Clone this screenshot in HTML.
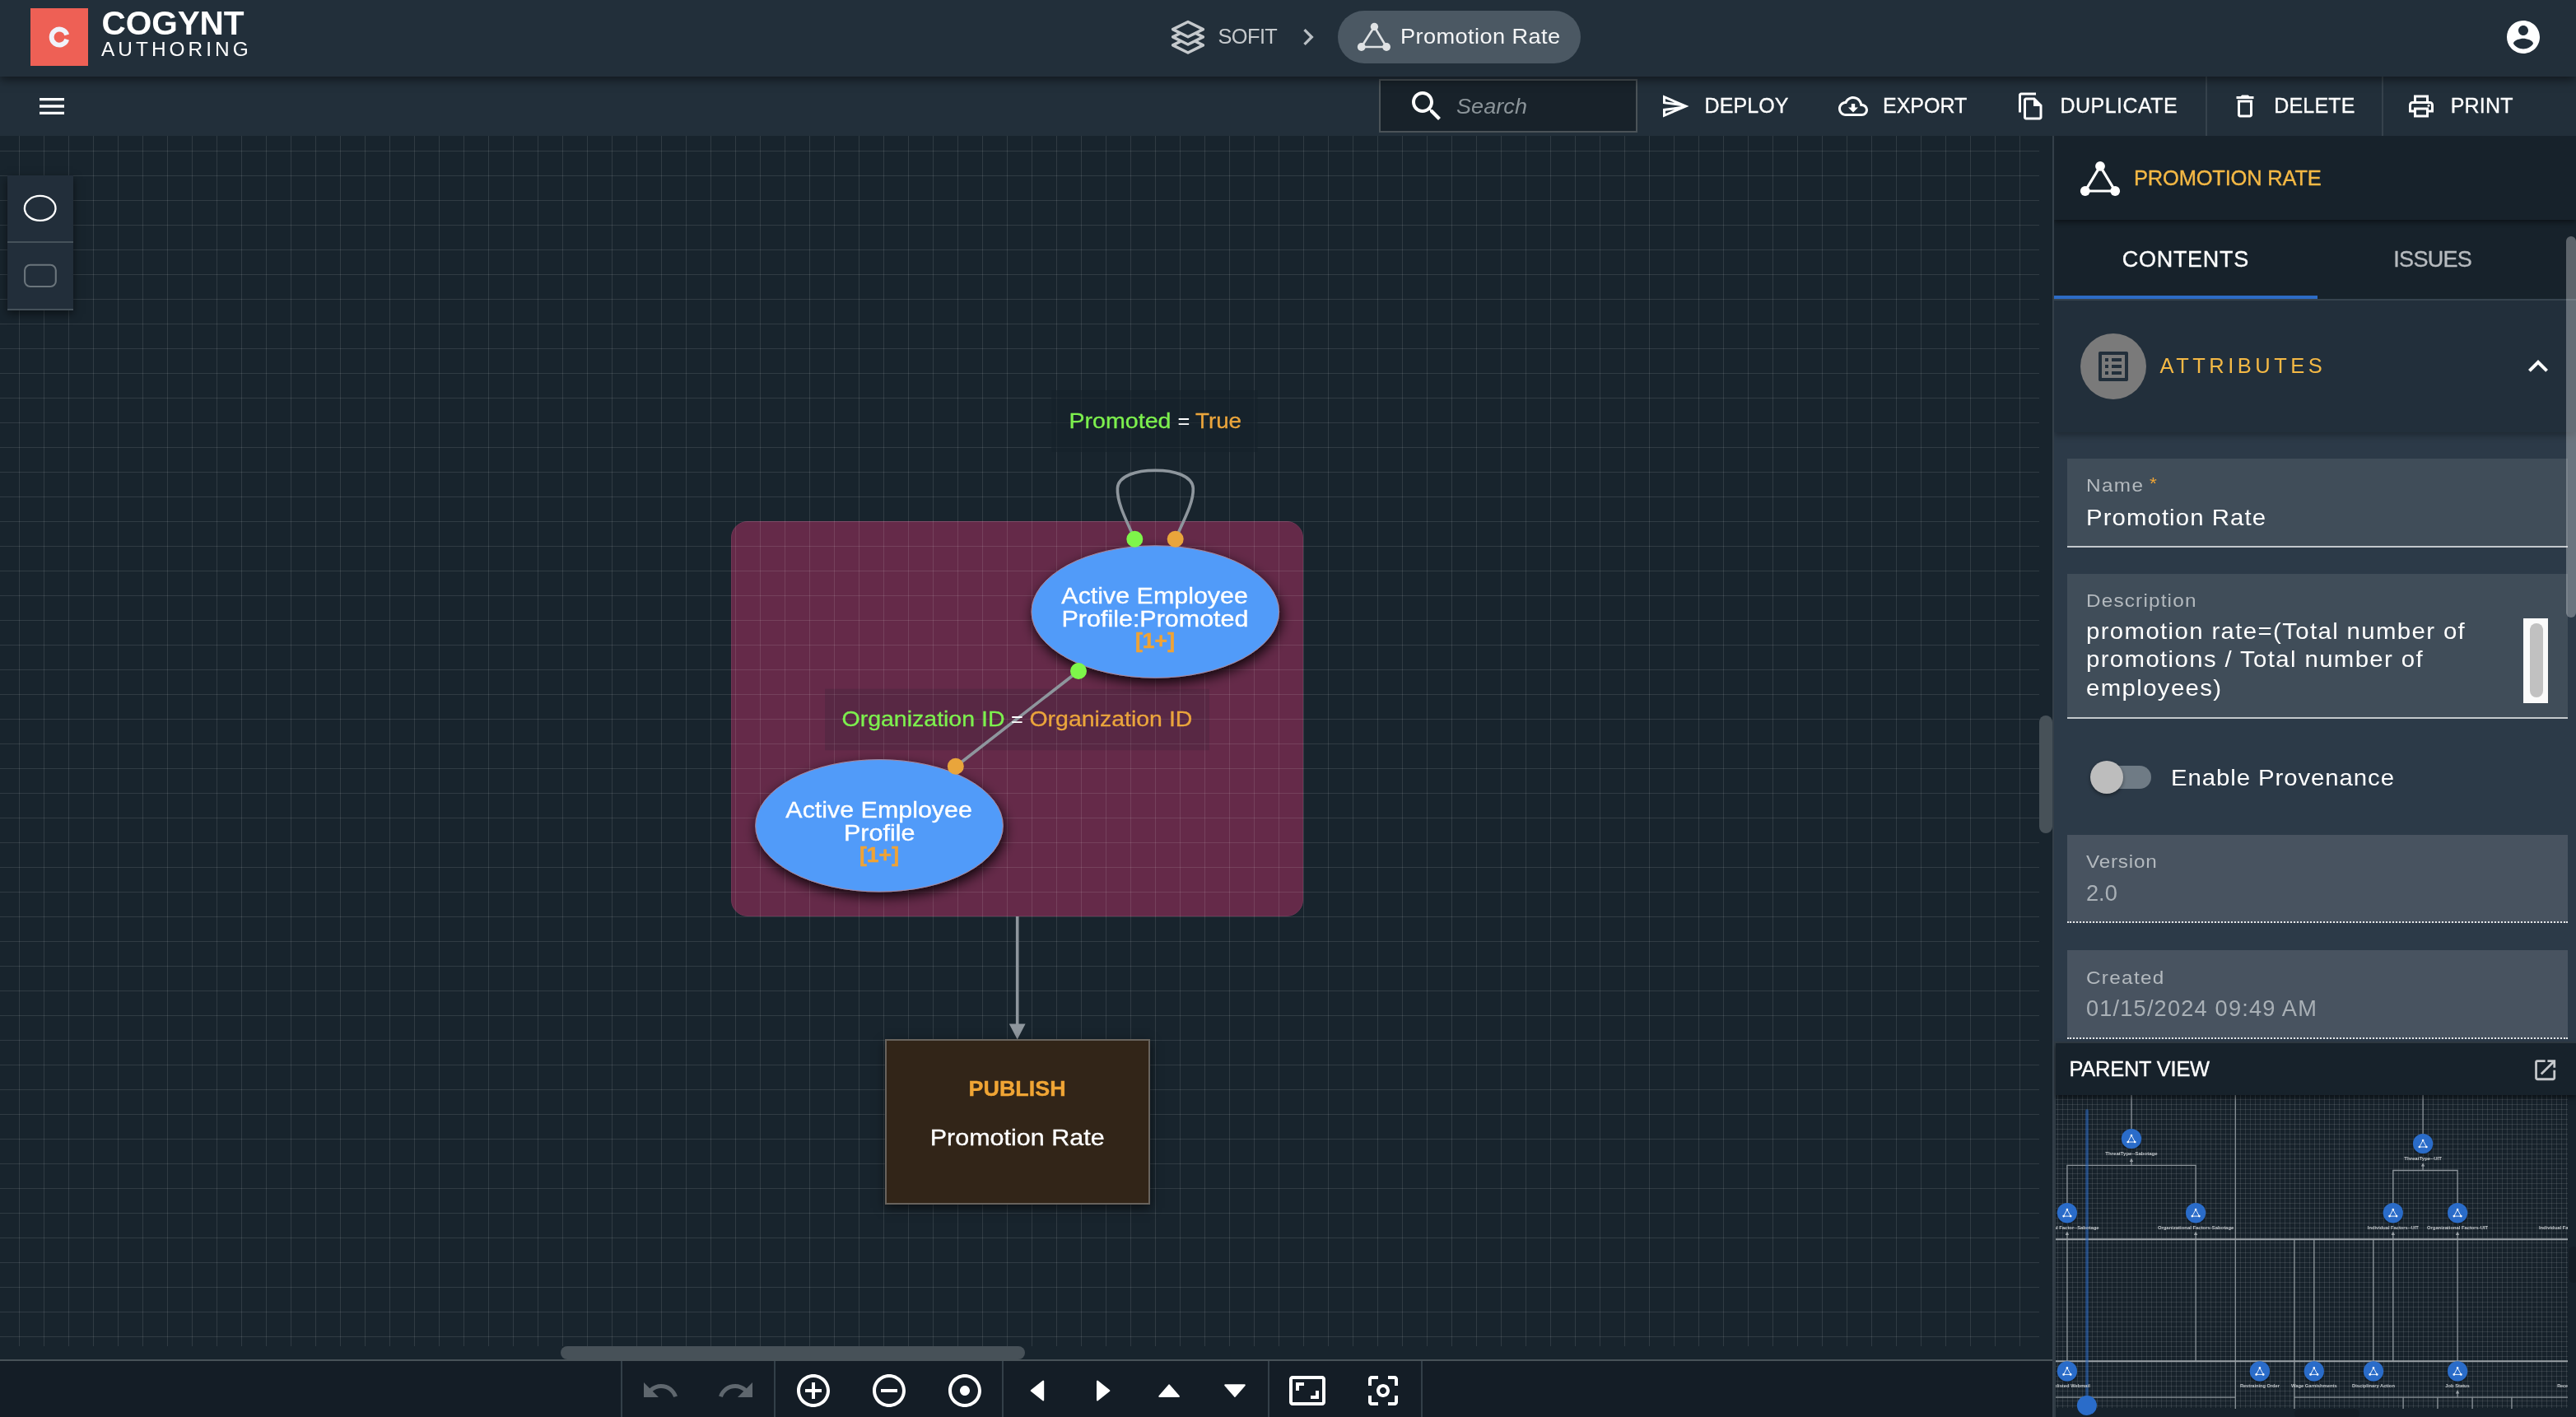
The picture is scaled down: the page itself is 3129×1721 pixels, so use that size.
<!DOCTYPE html>
<html lang="en">
<head>
<meta charset="utf-8">
<title>Cogynt Authoring - Promotion Rate</title>
<style>
*{box-sizing:border-box;margin:0;padding:0}
html,body{width:3129px;height:1721px;overflow:hidden;background:#18242d}
body{position:relative;font-family:"Liberation Sans",sans-serif;color:#fff;-webkit-font-smoothing:antialiased;will-change:transform}
.abs{position:absolute}
.t{position:absolute;white-space:nowrap;line-height:1}
.sx{transform:scaleX(1.08);transform-origin:0 50%}
svg{position:absolute;overflow:visible}
svg.ic{fill:#fff}
/* ---------- header ---------- */
#header{position:absolute;left:0;top:0;width:3129px;height:93px;background:#222f3a;box-shadow:0 4px 11px rgba(0,0,0,.5);z-index:30}
#logo{position:absolute;left:37px;top:10px;width:70px;height:70px;background:#ee6055}
#pill{position:absolute;left:1625px;top:13px;width:295px;height:64px;border-radius:32px;background:#4b5863}
/* ---------- toolbar ---------- */
#toolbar{position:absolute;left:0;top:93px;width:3129px;height:72px;background:#222f3a;z-index:20}
#search{position:absolute;left:1675px;top:3px;width:314px;height:65px;border:2px solid #4b5358;background:#18222a}
.tb{font-size:25px;color:#fff;top:25.5px;-webkit-text-stroke:.3px #fff}
.vdiv{position:absolute;top:0;width:2px;height:72px;background:#36424c}
/* ---------- canvas ---------- */
#canvas{position:absolute;left:0;top:165px;width:2493px;height:1486px;background:#18242d;overflow:hidden;z-index:1}
#grid{position:absolute;left:0;top:0;width:2477px;height:1470px;
 background-image:linear-gradient(to right,rgba(255,255,255,.105) 1px,transparent 1px),linear-gradient(to bottom,rgba(255,255,255,.105) 1px,transparent 1px);
 background-size:30px 30px;background-position:23px 18px}
#container{position:absolute;left:888px;top:468px;width:695px;height:480px;border-radius:20px;background:#652a49;border:1px solid #6f3554}
#palette{position:absolute;left:9px;top:48px;width:80px;height:164px;background:#222e3a;box-shadow:0 4px 10px rgba(0,0,0,.5)}
#palette .cell{height:82px;border-bottom:2px solid #45515a;position:relative}
.thumb{position:absolute;background:#475158;border-radius:8px}
#publish{position:absolute;left:1075px;top:1097px;width:322px;height:201px;background:#322518;border:2px solid #68635d;box-shadow:0 4px 12px rgba(0,0,0,.55)}
/* ---------- bottom bar ---------- */
#bbar{position:absolute;left:0;top:1651px;width:2493px;height:70px;background:#141d26;border-top:2px solid #485258;z-index:5}
#bbar .bd{position:absolute;top:0;width:2px;height:68px;background:#333f48}
/* ---------- right panel ---------- */
#panel{position:absolute;left:2493px;top:165px;width:636px;height:1556px;background:#2c3a48;border-left:2px solid #343f49;z-index:10;overflow:hidden}
#ptitle{position:absolute;left:0;top:0;width:634px;height:102px;background:#17222b;box-shadow:0 3px 6px rgba(0,0,0,.45);z-index:3}
#ptabs{position:absolute;left:0;top:102px;width:634px;height:98px;background:#17222b;border-bottom:2px solid #36434e;z-index:2}
#ptabs .ul{position:absolute;left:0;bottom:0;width:320px;height:4px;background:#2d6cc6}
#phead{position:absolute;left:0;top:200px;width:634px;height:160px;background:#222f3b;box-shadow:0 4px 8px rgba(0,0,0,.3);z-index:1}
.field{position:absolute;left:16px;width:608px;background:#404d59;border-bottom:2px solid #c3c8cc}
.field.ro{background:#485360;border-bottom:2px dotted #e6e8ea}
.lbl{font-size:22px;color:#b3b9be;left:24px}
.val{font-size:26.67px;color:#fff;left:24px}
.ro .val{color:#a9b0b6}
#pview{position:absolute;left:0;top:1100px;width:634px;height:456px;background:#303b44}
#pvhead{position:absolute;left:2px;top:2px;width:632px;height:63px;background:#17222b;box-shadow:0 3px 6px rgba(0,0,0,.5);z-index:2}
#mini{position:absolute;left:2px;top:65px;width:632px;height:391px;background:#17222b;overflow:hidden}
#minigrid{position:absolute;left:0;top:0;width:622px;height:380px;
 background-image:linear-gradient(to right,rgba(255,255,255,.1) 1px,transparent 1px),linear-gradient(to bottom,rgba(255,255,255,.1) 1px,transparent 1px);
 background-size:6px 6px;background-position:2px 5px}
</style>
</head>
<body>
<!-- ================= HEADER ================= -->
<div id="header">
  <div id="logo">
    <svg width="70" height="70" viewBox="0 0 70 70" style="left:0;top:0"><path d="M44.2 32.3 A9.5 9.5 0 1 0 44.2 37.9" fill="none" stroke="#f0f2fa" stroke-width="5.85"/></svg>
  </div>
  <div class="t" style="left:123.5px;top:8.2px;font-size:40.6px;font-weight:bold;letter-spacing:-0.1px">COGYNT</div>
  <div class="t" style="left:123px;top:48.3px;font-size:24.4px;letter-spacing:4.05px">AUTHORING</div>

  <svg width="44" height="44" viewBox="0 0 44 44" style="left:1421px;top:23px" fill="#222f3a" stroke="#c5c9cc" stroke-width="3.5" stroke-linejoin="round">
    <path d="M22 22.7 L40.4 31.9 L22 41 L3.6 31.9 Z"/>
    <path d="M22 12.7 L40.4 21.9 L22 31 L3.6 21.9 Z"/>
    <path d="M22 3.5 L40.4 12.6 L22 21.7 L3.6 12.6 Z"/>
  </svg>
  <div class="t" style="left:1479.5px;top:31.6px;font-size:25.4px;color:#c5c9cc;letter-spacing:-0.6px">SOFIT</div>
  <svg class="ic" width="40" height="40" viewBox="0 0 24 24" style="left:1569.2px;top:25px;fill:#b9bfc4"><path d="M10 6L8.59 7.41 13.17 12l-4.58 4.59L10 18l6-6z"/></svg>

  <div id="pill"></div>
  <svg width="44" height="40" viewBox="0 0 44 40" style="left:1647px;top:25px" stroke="#dfe2e4" stroke-width="2.6" fill="none">
    <path d="M22.4 7.5 L6.7 32 L37.1 32 Z"/>
    <g fill="#dfe2e4" stroke="none"><circle cx="22.4" cy="7.5" r="4.7"/><circle cx="6.7" cy="32" r="4.9"/><circle cx="37.1" cy="32" r="4.9"/></g>
  </svg>
  <div class="t" style="left:1700.5px;top:32px;font-size:25.4px;color:#f4f5f6;letter-spacing:.38px;transform:scaleX(1.07);transform-origin:0 50%">Promotion Rate</div>

  <svg class="ic" width="48" height="48" viewBox="0 0 24 24" style="left:3041px;top:21px"><path d="M12 2C6.48 2 2 6.48 2 12s4.48 10 10 10 10-4.48 10-10S17.52 2 12 2zm0 3c1.66 0 3 1.34 3 3s-1.34 3-3 3-3-1.34-3-3 1.34-3 3-3zm0 14.2c-2.5 0-4.71-1.28-6-3.22.03-1.99 4-3.08 6-3.08 1.99 0 5.97 1.09 6 3.08-1.29 1.94-3.5 3.22-6 3.22z"/></svg>
</div>

<!-- ================= TOOLBAR ================= -->
<div id="toolbar">
  <svg class="ic" width="40" height="40" viewBox="0 0 24 24" style="left:43px;top:16px"><path d="M3 18h18v-2H3v2zm0-5h18v-2H3v2zm0-7v2h18V6H3z"/></svg>

  <div id="search">
    <svg class="ic" width="48" height="48" viewBox="0 0 24 24" style="left:32px;top:7px"><path d="M15.5 14h-.79l-.28-.27C15.41 12.59 16 11.11 16 9.5 16 5.91 13.09 3 9.5 3S3 5.91 3 9.5 5.91 16 9.5 16c1.61 0 3.09-.59 4.23-1.57l.27.28v.79l5 4.99L20.49 19l-4.99-5zm-6 0C7.01 14 5 11.99 5 9.5S7.01 5 9.5 5 14 7.01 14 9.5 11.99 14 9.5 14z"/></svg>
    <div class="t" style="left:92px;top:18.6px;font-size:25.5px;font-style:italic;color:#8b9499;letter-spacing:.06px;transform:scaleX(1.06);transform-origin:0 50%">Search</div>
  </div>

  <svg class="ic" width="36" height="36" viewBox="0 0 24 24" style="left:2016.5px;top:18px"><path d="M4.01 6.03l7.51 3.22-7.52-1 .01-2.22m7.5 8.72L4 17.97v-2.22l7.51-1M2.01 3L2 10l15 2-15 2 .01 7L23 12 2.01 3z"/></svg>
  <div class="t tb" style="left:2070.5px;top:23px;letter-spacing:0.1px">DEPLOY</div>

  <svg class="ic" width="36" height="36" viewBox="0 0 24 24" style="left:2232.5px;top:18px"><path d="M19.35 10.04C18.67 6.59 15.64 4 12 4 9.11 4 6.6 5.64 5.35 8.04 2.34 8.36 0 10.91 0 14c0 3.31 2.69 6 6 6h13c2.76 0 5-2.24 5-5 0-2.64-2.05-4.78-4.65-4.96zM19 18H6c-2.21 0-4-1.79-4-4 0-2.05 1.53-3.76 3.56-3.97l1.07-.11.5-.95C8.08 7.14 9.94 6 12 6c2.62 0 4.88 1.86 5.39 4.43l.3 1.5 1.53.11c1.56.1 2.78 1.41 2.78 2.96 0 1.65-1.35 3-3 3zm-5.55-8h-2.9v3H8l4 4 4-4h-2.55z"/></svg>
  <div class="t tb" style="left:2287px;top:23px">EXPORT</div>

  <svg class="ic" width="36" height="36" viewBox="0 0 24 24" style="left:2448.6px;top:17.5px"><path d="M16 1H4c-1.1 0-2 .9-2 2v14h2V3h12V1zm-1 4H8c-1.1 0-1.99.9-1.99 2L6 21c0 1.1.89 2 1.99 2H19c1.1 0 2-.9 2-2V11l-6-6zM8 21V7h6v5h5v9H8z"/></svg>
  <div class="t tb" style="left:2502.5px;top:23px;letter-spacing:0.45px">DUPLICATE</div>

  <div class="vdiv" style="left:2679px"></div>
  <svg class="ic" width="36" height="36" viewBox="0 0 24 24" style="left:2708.5px;top:18px"><path d="M6 19c0 1.1.9 2 2 2h8c1.1 0 2-.9 2-2V7H6v12zM8 9h8v10H8V9zm7.5-5l-1-1h-5l-1 1H5v2h14V4z"/></svg>
  <div class="t tb" style="left:2762.3px;top:23px;letter-spacing:0.15px">DELETE</div>

  <div class="vdiv" style="left:2893px"></div>
  <svg class="ic" width="36" height="36" viewBox="0 0 24 24" style="left:2922.8px;top:18px"><path d="M19 8h-1V3H6v5H5c-1.66 0-3 1.34-3 3v6h4v4h12v-4h4v-6c0-1.66-1.34-3-3-3zM8 5h8v3H8V5zm8 12v2H8v-4h8v2zm2-2v-2H6v2H4v-4c0-.55.45-1 1-1h14c.55 0 1 .45 1 1v4h-2z"/><circle cx="18" cy="11.5" r="1"/></svg>
  <div class="t tb" style="left:2976.8px;top:23px;letter-spacing:0.15px">PRINT</div>
</div>
<!-- ================= CANVAS ================= -->
<div id="canvas">
  <div id="container"></div>
  <div id="grid"></div>

  <svg width="2493" height="1486" viewBox="0 165 2493 1486" style="left:0;top:0" font-family="Liberation Sans, sans-serif">
    <defs>
      <filter id="sh" x="-20%" y="-30%" width="140%" height="170%"><feDropShadow dx="2" dy="6" stdDeviation="7.5" flood-color="#000" flood-opacity=".85"/></filter>
    </defs>
    <!-- label backgrounds -->
    <rect x="1277" y="474" width="250.5" height="75" fill="#16212a" fill-opacity=".6"/>
    <rect x="1002" y="836.7" width="467" height="74.6" fill="#17222b" fill-opacity=".16"/>
    <!-- links -->
    <g fill="none" stroke="#8e969d" stroke-width="3.6" stroke-linecap="round">
      <path d="M1378.3 654.7 C1366 628 1356.6 609 1357.4 593 C1358.2 578 1380 571.2 1403.3 571.2 C1426.6 571.2 1448.5 578 1449.3 593 C1450 609 1440 628 1427.7 654.7"/>
      <path d="M1310 815 L1161 931"/>
      <path d="M1235.7 1113 L1235.7 1246" stroke-linecap="butt"/>
    </g>
    <path d="M1225.8 1243.4 L1245.6 1243.4 L1235.7 1262.6 Z" fill="#8e969d"/>

    <!-- link labels -->
    <g font-size="25.4" stroke-width=".3">
      <text x="1298.5" y="519.8" fill="#7df04e" stroke="#7df04e" textLength="124" lengthAdjust="spacingAndGlyphs">Promoted</text>
      <text x="1430.5" y="519.8" fill="#fff">=</text>
      <text x="1452" y="519.8" fill="#eba53c" stroke="#eba53c" textLength="56" lengthAdjust="spacingAndGlyphs">True</text>
    </g>
    <g font-size="25.4" stroke-width=".3">
      <text x="1022.5" y="881.7" fill="#7df04e" stroke="#7df04e" textLength="198" lengthAdjust="spacingAndGlyphs">Organization ID</text>
      <text x="1228" y="881.7" fill="#fff">=</text>
      <text x="1250.4" y="881.7" fill="#eba53c" stroke="#eba53c" textLength="198" lengthAdjust="spacingAndGlyphs">Organization ID</text>
    </g>

    <!-- nodes -->
    <g filter="url(#sh)">
      <ellipse cx="1403.3" cy="743" rx="150.3" ry="80.2" fill="#519bf9" stroke="#a78aa0" stroke-width="1"/>
      <ellipse cx="1068" cy="1002.8" rx="150.3" ry="80.2" fill="#519bf9" stroke="#a78aa0" stroke-width="1"/>
    </g>
    <g font-size="27.2" fill="#fff" stroke="#fff" stroke-width=".35" text-anchor="middle">
      <text x="1402.6" y="733.2" textLength="226.5" lengthAdjust="spacingAndGlyphs">Active Employee</text>
      <text x="1403" y="761" textLength="227" lengthAdjust="spacingAndGlyphs">Profile:Promoted</text>
      <text x="1067.6" y="993" textLength="226.5" lengthAdjust="spacingAndGlyphs">Active Employee</text>
      <text x="1068.2" y="1020.8" textLength="86.5" lengthAdjust="spacingAndGlyphs">Profile</text>
    </g>
    <g font-size="25.7" font-weight="bold" fill="#f0a335" stroke="#f0a335" stroke-width=".5" text-anchor="middle">
      <text x="1403" y="786.7" textLength="48" lengthAdjust="spacingAndGlyphs">[1+]</text>
      <text x="1068" y="1046.5" textLength="48" lengthAdjust="spacingAndGlyphs">[1+]</text>
    </g>
    <!-- ports -->
    <circle cx="1378.3" cy="654.7" r="10" fill="#7ef64a"/>
    <circle cx="1427.7" cy="654.7" r="10" fill="#e9a53b"/>
    <circle cx="1310" cy="815" r="10" fill="#7ef64a"/>
    <circle cx="1160.8" cy="930.8" r="10" fill="#e9a53b"/>
  </svg>

  <div id="publish"></div>
  <svg width="322" height="201" viewBox="1075 1262 322 201" style="left:1075px;top:1097px" font-family="Liberation Sans, sans-serif" text-anchor="middle">
    <text x="1235.6" y="1330.6" font-size="26" font-weight="bold" fill="#f0a535" stroke="#f0a535" stroke-width=".4" textLength="118" lengthAdjust="spacingAndGlyphs">PUBLISH</text>
    <text x="1235.7" y="1391" font-size="27.2" fill="#fff" stroke="#fff" stroke-width=".3" textLength="212" lengthAdjust="spacingAndGlyphs">Promotion Rate</text>
  </svg>

  <div id="palette">
    <div class="cell"><svg width="80" height="80" style="left:0;top:0"><ellipse cx="39.7" cy="39.9" rx="18.8" ry="15" fill="none" stroke="#fff" stroke-width="2.3"/></svg></div>
    <div class="cell"><svg width="80" height="80" style="left:0;top:0"><rect x="21.1" y="26.8" width="37.7" height="26.2" rx="6.5" fill="none" stroke="#6b757c" stroke-width="2.1"/></svg></div>
  </div>

  <div class="thumb" style="left:681px;top:1470px;width:564px;height:16px"></div>
  <div class="thumb" style="left:2477px;top:704px;width:16px;height:143px"></div>
</div>
<!-- ================= BOTTOM BAR ================= -->
<div id="bbar">
  <div class="bd" style="left:754px"></div>
  <div class="bd" style="left:940px"></div>
  <div class="bd" style="left:1217px"></div>
  <div class="bd" style="left:1540px"></div>
  <div class="bd" style="left:1726px"></div>
  <svg class="ic" width="48" height="48" viewBox="0 0 24 24" style="left:777.6px;top:12.4px;fill:#5f676e"><path d="M12.5 8c-2.65 0-5.05.99-6.9 2.6L2 7v9h9l-3.62-3.62c1.39-1.16 3.16-1.88 5.12-1.88 3.54 0 6.55 2.31 7.6 5.5l2.37-.78C21.08 11.03 17.15 8 12.5 8z"/></svg>
  <svg class="ic" width="48" height="48" viewBox="0 0 24 24" style="left:870px;top:12.4px;fill:#5f676e"><path d="M18.4 10.6C16.55 8.99 14.15 8 11.5 8c-4.65 0-8.58 3.03-9.96 7.22L3.9 16c1.05-3.19 4.05-5.5 7.6-5.5 1.95 0 3.73.72 5.12 1.88L13 16h9V7l-3.6 3.6z"/></svg>
  <svg class="ic" width="48" height="48" viewBox="0 0 24 24" style="left:964px;top:12.3px"><path d="M13 7h-2v4H7v2h4v4h2v-4h4v-2h-4V7zm-1-5C6.48 2 2 6.48 2 12s4.48 10 10 10 10-4.48 10-10S17.52 2 12 2zm0 18c-4.41 0-8-3.59-8-8s3.59-8 8-8 8 3.59 8 8-3.59 8-8 8z"/></svg>
  <svg class="ic" width="48" height="48" viewBox="0 0 24 24" style="left:1056px;top:12.3px"><path d="M7 11v2h10v-2H7zm5-9C6.48 2 2 6.48 2 12s4.48 10 10 10 10-4.48 10-10S17.52 2 12 2zm0 18c-4.41 0-8-3.59-8-8s3.59-8 8-8 8 3.59 8 8-3.59 8-8 8z"/></svg>
  <svg class="ic" width="48" height="48" viewBox="0 0 24 24" style="left:1148px;top:12.3px"><path d="M12 2C6.49 2 2 6.49 2 12s4.49 10 10 10 10-4.49 10-10S17.51 2 12 2zm0 18c-4.41 0-8-3.59-8-8s3.59-8 8-8 8 3.59 8 8-3.59 8-8 8zm3-8c0 1.66-1.34 3-3 3s-3-1.34-3-3 1.34-3 3-3 3 1.34 3 3z"/></svg>
  <svg width="300" height="68" viewBox="1230 1653 300 68" style="left:1230px;top:0" fill="#fff" stroke="#fff" stroke-width="2" stroke-linejoin="round">
    <path d="M1267.2 1677.6 L1267.2 1700.5 L1252.7 1689 Z"/>
    <path d="M1333 1677.6 L1333 1700.5 L1347.4 1689 Z"/>
    <path d="M1408.3 1695.9 L1431.9 1695.9 L1420.1 1682.3 Z"/>
    <path d="M1488.2 1682.3 L1511.8 1682.3 L1500 1695.9 Z"/>
  </svg>
  <svg class="ic" width="48" height="48" viewBox="0 0 24 24" style="left:1564px;top:12.3px"><path d="M19 12h-2v3h-3v2h5v-5zM7 9h3V7H5v5h2V9zm14-6H3c-1.1 0-2 .9-2 2v14c0 1.1.9 2 2 2h18c1.1 0 2-.9 2-2V5c0-1.1-.9-2-2-2zm0 16.01H3V4.99h18v14.02z"/></svg>
  <svg class="ic" width="48" height="48" viewBox="0 0 24 24" style="left:1656px;top:12.3px"><path d="M5 15H3v4c0 1.1.9 2 2 2h4v-2H5v-4zM5 5h4V3H5c-1.1 0-2 .9-2 2v4h2V5zm14-2h-4v2h4v4h2V5c0-1.1-.9-2-2-2zm0 16h-4v2h4c1.1 0 2-.9 2-2v-4h-2v4zM12 8c-2.21 0-4 1.79-4 4s1.79 4 4 4 4-1.79 4-4-1.79-4-4-4zm0 6c-1.1 0-2-.9-2-2s.9-2 2-2 2 .9 2 2-.9 2-2 2z"/></svg>
</div>
<!-- ================= RIGHT PANEL ================= -->
<div id="panel">
  <div id="ptitle">
    <svg width="100" height="100" viewBox="0 0 100 100" style="left:0;top:0" stroke="#fff" stroke-width="3.2" fill="none">
      <path d="M56 36.8 L37.8 67 L74.2 67 Z"/>
      <g fill="#fff" stroke="none"><circle cx="56" cy="36.8" r="5.9"/><circle cx="37.8" cy="67" r="5.9"/><circle cx="74.2" cy="67" r="5.9"/></g>
    </svg>
    <div class="t" style="left:97px;top:38.9px;font-size:25.5px;color:#f5b945;letter-spacing:-0.2px;-webkit-text-stroke:.35px #f5b945">PROMOTION RATE</div>
  </div>

  <div id="ptabs">
    <div class="t" style="left:82.8px;top:35.4px;font-size:27px;color:#fff;letter-spacing:0.7px;-webkit-text-stroke:.35px #fff">CONTENTS</div>
    <div class="t" style="left:412.3px;top:35.4px;font-size:27px;color:#b7bbbf;letter-spacing:-0.7px;-webkit-text-stroke:.35px #b7bbbf">ISSUES</div>
    <div class="ul"></div>
  </div>

  <div id="phead">
    <div class="abs" style="left:32px;top:40px;width:80px;height:80px;border-radius:50%;background:#7a7a7a"></div>
    <svg width="48" height="48" viewBox="0 0 24 24" style="left:48px;top:56px;fill:#222f3b"><path d="M19 5v14H5V5h14m1.100-2H3.900c-.5 0-.9.400-.9.900v16.200c0 .400.400.900.900.900h16.200c.400 0 .9-.5.900-.9V3.900c0-.5-.5-.9-.9-.9zM11 7h6v2h-6V7zm0 4h6v2h-6v-2zm0 4h6v2h-6zM7 7h2v2H7zm0 4h2v2H7zm0 4h2v2H7z"/></svg>
    <div class="t" style="left:128.6px;top:66.6px;font-size:25.5px;color:#f5b945;letter-spacing:4.5px">ATTRIBUTES</div>
    <svg class="ic" width="48" height="48" viewBox="0 0 24 24" style="left:564.2px;top:56.4px"><path d="M12 8l-6 6 1.41 1.41L12 10.83l4.59 4.58L18 14z"/></svg>
  </div>

  <div class="field" style="top:392px;height:107.5px">
    <div class="t lbl sx" style="top:22.2px;font-size:22.5px;left:22.9px;letter-spacing:1.27px">Name<span style="color:#f0a535;font-size:21px;position:relative;top:-3.2px;left:6.3px;letter-spacing:0">*</span></div>
    <div class="t val sx" style="top:58.1px;font-size:27.2px;left:22.9px;letter-spacing:1px">Promotion Rate</div>
  </div>

  <div class="field" style="top:532.2px;height:176.2px">
    <div class="t lbl sx" style="top:22.1px;font-size:22.5px;left:22.9px;letter-spacing:1.1px">Description</div>
    <div class="t val sx" style="top:52.7px;font-size:27.2px;left:22.9px;line-height:34.5px;white-space:nowrap;letter-spacing:1.27px">promotion rate=(Total number of<br>promotions / Total number of<br>employees)</div>
    <div class="abs" style="left:554px;top:54px;width:30px;height:102.8px;background:#fafafa"></div>
    <div class="abs" style="left:562px;top:59.4px;width:16px;height:90.4px;border-radius:8px;background:#c1c1c1"></div>
  </div>

  <div class="abs" style="left:50px;top:765px;width:68px;height:28px;border-radius:14px;background:#6f7b85"></div>
  <div class="abs" style="left:44px;top:759px;width:40px;height:40px;border-radius:50%;background:#bdbdbd;box-shadow:0 2px 4px rgba(0,0,0,.4)"></div>
  <div class="t sx" style="left:141.5px;top:765.6px;font-size:27.2px;color:#fff;letter-spacing:0.85px">Enable Provenance</div>

  <div class="field ro" style="top:848.7px;height:107.6px">
    <div class="t lbl sx" style="top:22.7px;font-size:22.5px;left:22.9px;letter-spacing:0.72px">Version</div>
    <div class="t val" style="top:57.6px;font-size:27.2px;left:22.9px;letter-spacing:0.1px">2.0</div>
  </div>

  <div class="field ro" style="top:989px;height:108px">
    <div class="t lbl sx" style="top:22.5px;font-size:22.5px;left:22.9px;letter-spacing:1.22px">Created</div>
    <div class="t val" style="top:57.4px;font-size:27.2px;left:22.9px;letter-spacing:1.19px">01/15/2024 09:49 AM</div>
  </div>

  <div class="abs" style="left:622px;top:122px;width:12px;height:463px;border-radius:6px;background:rgba(255,255,255,.3);z-index:8"></div>
  <div id="pview">
    <div id="pvhead">
      <div class="t" style="left:16.5px;top:18.9px;font-size:25.4px;color:#fff;letter-spacing:-0.2px;-webkit-text-stroke:.35px #fff">PARENT VIEW</div>
      <svg width="33.3" height="33.3" viewBox="0 0 24 24" style="left:577.6px;top:15.6px;fill:#c5c8cb"><path d="M19 19H5V5h7V3H5c-1.11 0-2 .9-2 2v14c0 1.1.89 2 2 2h14c1.1 0 2-.9 2-2v-7h-2v7zM14 3v2h3.59l-9.83 9.83 1.41 1.41L19 6.41V10h2V3h-7z"/></svg>
    </div>
    <div id="mini">
      <div id="minigrid"></div>
      <svg width="622" height="391" viewBox="2497 1330 622 391" style="left:0;top:0;overflow:hidden" font-family="Liberation Sans, sans-serif">
        <defs><filter id="ms" x="-30%" y="-30%" width="160%" height="170%"><feDropShadow dx="0" dy="1" stdDeviation="1" flood-color="#000" flood-opacity=".6"/></filter></defs>
        <g fill="none" stroke="#8b9399" stroke-width="1.3">
          <path d="M2589 1330V1371"/>
          <path d="M2715.3 1330V1711"/>
          <path d="M2943.1 1330V1377"/>
          <path d="M2510.9 1461V1415.3H2667.1V1461"/>
          <path d="M2589 1415.3V1409"/>
          <path d="M2906.8 1461V1421.5H2985.1V1461"/>
          <path d="M2943.1 1421.5V1415"/>
          <path d="M2510.9 1505V1499"/>
          <path d="M2667.1 1505V1499"/>
          <path d="M2906.8 1505V1499"/>
          <path d="M2985.1 1505V1499"/>
          <path d="M2510.9 1505V1654"/>
          <path d="M2667.1 1505V1653"/>
          <path d="M2786.9 1505V1711"/>
          <path d="M2810.8 1505V1654"/>
          <path d="M2882.8 1505V1654"/>
          <path d="M2906.8 1505V1653"/>
          <path d="M2985.1 1505V1654"/>
          <path d="M2497 1697.2H2715.3"/>
          <path d="M2786.9 1697.2H3119"/>
          <path d="M2919.1 1697V1711"/>
          <path d="M2960.9 1697V1711"/>
          <path d="M3003.1 1697V1711"/>
          <path d="M3050.9 1697V1711"/>
          <path d="M2985.1 1697V1691"/>
        </g>
        <g fill="none" stroke="#9ba2a7" stroke-width="2"><path d="M2497 1505.3H3119"/><path d="M2497 1653.3H3119"/></g>
        <g fill="#9aa1a6">
          <path d="M2589.0 1406.5 l-2.2 4.4 h4.4 z"/>
          <path d="M2943.1 1412.2 l-2.2 4.4 h4.4 z"/>
          <path d="M2510.9 1495.6 l-2.2 4.4 h4.4 z"/>
          <path d="M2667.1 1495.6 l-2.2 4.4 h4.4 z"/>
          <path d="M2906.8 1495.6 l-2.2 4.4 h4.4 z"/>
          <path d="M2985.1 1495.6 l-2.2 4.4 h4.4 z"/>
          <path d="M2985.1 1688.0 l-2.2 4.4 h4.4 z"/>
        </g>
        <path d="M2535 1349V1700" stroke="#2a6cc9" stroke-opacity=".52" stroke-width="3.6" stroke-linecap="round" fill="none"/>
        <g transform="translate(2589.0 1383.0)"><circle r="12.1" fill="#2a6cc9" filter="url(#ms)"/><path d="M0 -4 L-4.3 4 L4.3 4 Z" fill="none" stroke="#fff" stroke-width=".9"/><circle cx="0" cy="-4" r="1.3" fill="#fff"/><circle cx="-4.3" cy="4" r="1.3" fill="#fff"/><circle cx="4.3" cy="4" r="1.3" fill="#fff"/></g>
        <g transform="translate(2943.1 1389.0)"><circle r="12.1" fill="#2a6cc9" filter="url(#ms)"/><path d="M0 -4 L-4.3 4 L4.3 4 Z" fill="none" stroke="#fff" stroke-width=".9"/><circle cx="0" cy="-4" r="1.3" fill="#fff"/><circle cx="-4.3" cy="4" r="1.3" fill="#fff"/><circle cx="4.3" cy="4" r="1.3" fill="#fff"/></g>
        <g transform="translate(2510.9 1473.1)"><circle r="12.1" fill="#2a6cc9" filter="url(#ms)"/><path d="M0 -4 L-4.3 4 L4.3 4 Z" fill="none" stroke="#fff" stroke-width=".9"/><circle cx="0" cy="-4" r="1.3" fill="#fff"/><circle cx="-4.3" cy="4" r="1.3" fill="#fff"/><circle cx="4.3" cy="4" r="1.3" fill="#fff"/></g>
        <g transform="translate(2667.1 1473.1)"><circle r="12.1" fill="#2a6cc9" filter="url(#ms)"/><path d="M0 -4 L-4.3 4 L4.3 4 Z" fill="none" stroke="#fff" stroke-width=".9"/><circle cx="0" cy="-4" r="1.3" fill="#fff"/><circle cx="-4.3" cy="4" r="1.3" fill="#fff"/><circle cx="4.3" cy="4" r="1.3" fill="#fff"/></g>
        <g transform="translate(2906.8 1473.1)"><circle r="12.1" fill="#2a6cc9" filter="url(#ms)"/><path d="M0 -4 L-4.3 4 L4.3 4 Z" fill="none" stroke="#fff" stroke-width=".9"/><circle cx="0" cy="-4" r="1.3" fill="#fff"/><circle cx="-4.3" cy="4" r="1.3" fill="#fff"/><circle cx="4.3" cy="4" r="1.3" fill="#fff"/></g>
        <g transform="translate(2985.1 1473.1)"><circle r="12.1" fill="#2a6cc9" filter="url(#ms)"/><path d="M0 -4 L-4.3 4 L4.3 4 Z" fill="none" stroke="#fff" stroke-width=".9"/><circle cx="0" cy="-4" r="1.3" fill="#fff"/><circle cx="-4.3" cy="4" r="1.3" fill="#fff"/><circle cx="4.3" cy="4" r="1.3" fill="#fff"/></g>
        <g transform="translate(2510.9 1665.4)"><circle r="12.1" fill="#2a6cc9" filter="url(#ms)"/><path d="M0 -4 L-4.3 4 L4.3 4 Z" fill="none" stroke="#fff" stroke-width=".9"/><circle cx="0" cy="-4" r="1.3" fill="#fff"/><circle cx="-4.3" cy="4" r="1.3" fill="#fff"/><circle cx="4.3" cy="4" r="1.3" fill="#fff"/></g>
        <g transform="translate(2744.9 1665.4)"><circle r="12.1" fill="#2a6cc9" filter="url(#ms)"/><path d="M0 -4 L-4.3 4 L4.3 4 Z" fill="none" stroke="#fff" stroke-width=".9"/><circle cx="0" cy="-4" r="1.3" fill="#fff"/><circle cx="-4.3" cy="4" r="1.3" fill="#fff"/><circle cx="4.3" cy="4" r="1.3" fill="#fff"/></g>
        <g transform="translate(2810.8 1665.4)"><circle r="12.1" fill="#2a6cc9" filter="url(#ms)"/><path d="M0 -4 L-4.3 4 L4.3 4 Z" fill="none" stroke="#fff" stroke-width=".9"/><circle cx="0" cy="-4" r="1.3" fill="#fff"/><circle cx="-4.3" cy="4" r="1.3" fill="#fff"/><circle cx="4.3" cy="4" r="1.3" fill="#fff"/></g>
        <g transform="translate(2883.0 1665.4)"><circle r="12.1" fill="#2a6cc9" filter="url(#ms)"/><path d="M0 -4 L-4.3 4 L4.3 4 Z" fill="none" stroke="#fff" stroke-width=".9"/><circle cx="0" cy="-4" r="1.3" fill="#fff"/><circle cx="-4.3" cy="4" r="1.3" fill="#fff"/><circle cx="4.3" cy="4" r="1.3" fill="#fff"/></g>
        <g transform="translate(2985.1 1665.4)"><circle r="12.1" fill="#2a6cc9" filter="url(#ms)"/><path d="M0 -4 L-4.3 4 L4.3 4 Z" fill="none" stroke="#fff" stroke-width=".9"/><circle cx="0" cy="-4" r="1.3" fill="#fff"/><circle cx="-4.3" cy="4" r="1.3" fill="#fff"/><circle cx="4.3" cy="4" r="1.3" fill="#fff"/></g>
        <g font-size="5.6" font-weight="bold" fill="#c3c8cc" text-anchor="middle">
          <text x="2589.0" y="1403.0" textLength="63.3" lengthAdjust="spacingAndGlyphs">ThreatType--Sabotage</text>
          <text x="2943.1" y="1409.0" textLength="45.6" lengthAdjust="spacingAndGlyphs">ThreatType--UIT</text>
          <text x="2510.9" y="1493.1" textLength="77.5" lengthAdjust="spacingAndGlyphs">Individual Factor--Sabotage</text>
          <text x="2667.1" y="1493.1" textLength="92.4" lengthAdjust="spacingAndGlyphs">Organizational Factors-Sabotage</text>
          <text x="2906.8" y="1493.1" textLength="62.0" lengthAdjust="spacingAndGlyphs">Individual Factors--UIT</text>
          <text x="2985.1" y="1493.1" textLength="74.0" lengthAdjust="spacingAndGlyphs">Organizational Factors-UIT</text>
          <text x="2510.9" y="1685.1" textLength="55.8" lengthAdjust="spacingAndGlyphs">Blacklisted Webmail</text>
          <text x="2744.9" y="1685.1" textLength="48.0" lengthAdjust="spacingAndGlyphs">Restraining Order</text>
          <text x="2810.8" y="1685.1" textLength="55.6" lengthAdjust="spacingAndGlyphs">Wage Garnishments</text>
          <text x="2883.0" y="1685.1" textLength="51.8" lengthAdjust="spacingAndGlyphs">Disciplinary Action</text>
          <text x="2985.1" y="1685.1" textLength="29.5" lengthAdjust="spacingAndGlyphs">Job Status</text>
          <text x="3083.9" y="1493.1" text-anchor="start" textLength="70" lengthAdjust="spacingAndGlyphs">Individual Factors--Fraud</text>
          <text x="3106.2" y="1685.1" text-anchor="start" textLength="50" lengthAdjust="spacingAndGlyphs">Recent Termination</text>
        </g>
      </svg>
      <svg width="632" height="391" viewBox="2497 1330 632 391" style="left:0;top:0"><circle cx="2534.9" cy="1706.9" r="12" fill="#2a6cc9"/></svg>
      <div class="abs" style="left:623px;top:183.7px;width:12px;height:44.7px;border-radius:6px;background:#141d25"></div>
      <div class="abs" style="left:290px;top:381px;width:79px;height:12px;border-radius:6px;background:#141d25"></div>
    </div>
  </div>
</div>
</body>
</html>
